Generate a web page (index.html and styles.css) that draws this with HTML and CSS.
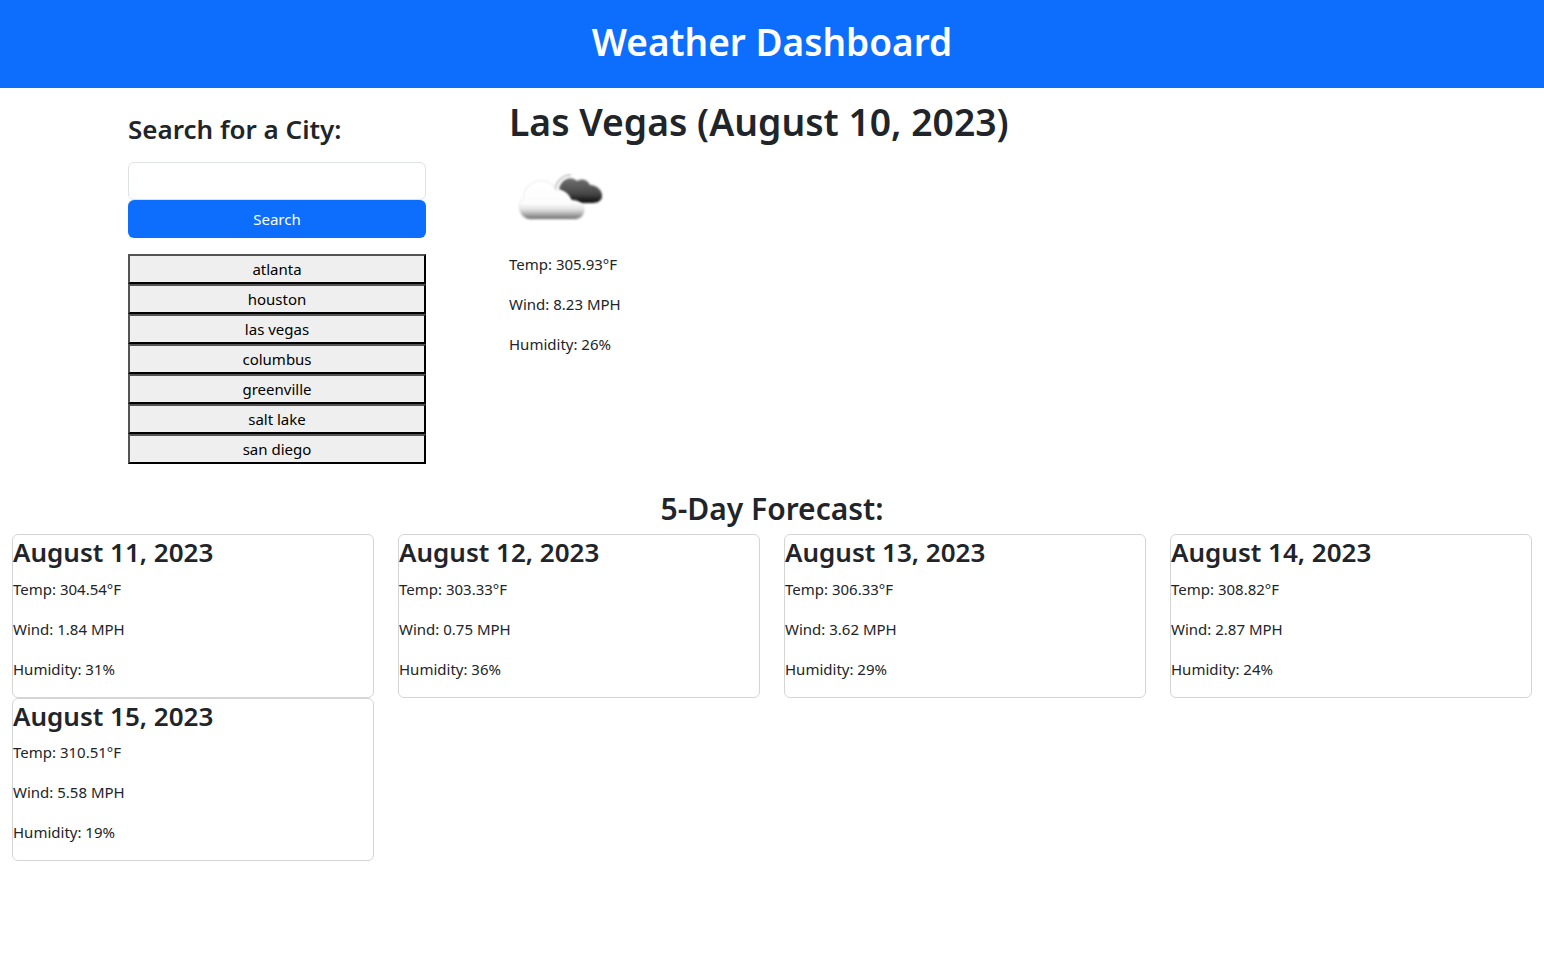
FILE: index.html
```html
<!DOCTYPE html>
<html lang="en">
<head>
  <meta charset="UTF-8" />
  <title>Weather Dashboard</title>
  <link rel="stylesheet" href="styles.css">
</head>
<body>
  <header class="banner">
    <h1>Weather Dashboard</h1>
  </header>

  <section class="top">
    <aside class="search">
      <h4>Search for a City:</h4>
      <input type="text" class="city-input" />
      <button class="search-btn">Search</button>
      <div class="history">
        <button>atlanta</button>
        <button>houston</button>
        <button>las vegas</button>
        <button>columbus</button>
        <button>greenville</button>
        <button>salt lake</button>
        <button>san diego</button>
      </div>
    </aside>

    <main class="current">
      <h2>Las Vegas (August 10, 2023)</h2>
      <svg class="icon" width="100" height="100" viewBox="0 0 100 100">
        <defs>
          <linearGradient id="front" x1="0" y1="0" x2="0" y2="1">
            <stop offset="0" stop-color="#ffffff" />
            <stop offset="0.6" stop-color="#fcfcfc" />
            <stop offset="0.76" stop-color="#dedede" />
            <stop offset="0.9" stop-color="#a0a0a0" />
            <stop offset="1" stop-color="#707070" />
          </linearGradient>
          <linearGradient id="back" x1="0" y1="0" x2="0" y2="1">
            <stop offset="0" stop-color="#707070" />
            <stop offset="0.6" stop-color="#4a4a4a" />
            <stop offset="1" stop-color="#0a0a0a" />
          </linearGradient>
          <filter id="soft"><feGaussianBlur stdDeviation="0.8" /></filter>
          <filter id="halo"><feGaussianBlur stdDeviation="1.6" /></filter>
        </defs>
        <path d="M20 74 C10 72 7 59 15 53 C14 42 25 35 34 36 C40 36 44 40 47 46 C55 44 60 49 62 55 C70 54 76 60 75 66 C74 72 70 74 65 74 Z" fill="#e4e4e4" filter="url(#halo)" />
        <path d="M50 44 C52 34 62 30 68 36 C73 33 79 35 81 40 C88 40 94 46 93 52 C92 57 87 58 82 58 L64 58 C60 52 56 48 50 44 Z" fill="url(#back)" filter="url(#soft)" />
        <path d="M46 45 C47 37 53 30 62 30" fill="none" stroke="#b8b8b8" stroke-width="1.6" filter="url(#soft)" />
        <path d="M20 74 C10 72 7 59 15 53 C14 42 25 35 34 36 C40 36 44 40 47 46 C55 44 60 49 62 55 C70 54 76 60 75 66 C74 72 70 74 65 74 Z" fill="url(#front)" filter="url(#soft)" />
      </svg>
      <p>Temp: 305.93°F</p>
      <p>Wind: 8.23 MPH</p>
      <p>Humidity: 26%</p>
    </main>
  </section>

  <h3 class="forecast-title">5-Day Forecast:</h3>

  <section class="forecast">
    <div class="card">
      <h4>August 11, 2023</h4>
      <p>Temp: 304.54°F</p>
      <p>Wind: 1.84 MPH</p>
      <p>Humidity: 31%</p>
    </div>
    <div class="card">
      <h4>August 12, 2023</h4>
      <p>Temp: 303.33°F</p>
      <p>Wind: 0.75 MPH</p>
      <p>Humidity: 36%</p>
    </div>
    <div class="card">
      <h4>August 13, 2023</h4>
      <p>Temp: 306.33°F</p>
      <p>Wind: 3.62 MPH</p>
      <p>Humidity: 29%</p>
    </div>
    <div class="card">
      <h4>August 14, 2023</h4>
      <p>Temp: 308.82°F</p>
      <p>Wind: 2.87 MPH</p>
      <p>Humidity: 24%</p>
    </div>
    <div class="card">
      <h4>August 15, 2023</h4>
      <p>Temp: 310.51°F</p>
      <p>Wind: 5.58 MPH</p>
      <p>Humidity: 19%</p>
    </div>
  </section>
</body>
</html>
```

FILE: styles.css
```css
* {
  box-sizing: border-box;
}
body {
  margin: 0;
  font-family: "Noto Sans", "Open Sans", sans-serif;
  font-size: 15px;
  line-height: 24px;
  color: #212529;
  background: #fff;
}
h1, h2, h3, h4, p {
  margin: 0;
}
h1, h2, h3, h4 {
  font-weight: 600;
}
.banner {
  height: 88px;
  padding-top: 18px;
  background: #0d6efd;
  color: #fff;
  text-align: center;
}
.banner h1 {
  font-size: 37px;
  line-height: 48px;
}
.top {
  display: flex;
  height: 388px;
}
.search {
  width: 298px;
  margin-left: 128px;
  padding-top: 23px;
}
.search h4 {
  font-size: 26px;
  line-height: 36px;
  margin-bottom: 15px;
}
.city-input {
  display: block;
  width: 100%;
  height: 38px;
  border: 1px solid #dee2e6;
  border-radius: 6px;
  background: #fff;
}
.search-btn {
  display: block;
  width: 100%;
  height: 38px;
  border: 0;
  border-radius: 6px;
  background: #0d6efd;
  color: #fff;
  font: inherit;
}
.history {
  margin-top: 16px;
}
.history button {
  display: block;
  width: 100%;
  height: 30px;
  padding: 0;
  border: 2px outset #000;
  background: #efefef;
  color: #000;
  font: inherit;
}
.current {
  margin-left: 83px;
  padding-top: 10px;
}
.current h2 {
  font-size: 37.3px;
  line-height: 47px;
}
.icon {
  display: block;
}
.current .icon {
  margin-bottom: 7px;
}
.current p {
  margin-bottom: 16px;
}
.forecast-title {
  font-size: 30px;
  line-height: 36px;
  text-align: center;
  margin-top: 15px;
}
.forecast {
  display: flex;
  flex-wrap: wrap;
  margin-top: 7px;
}
.card {
  width: 362px;
  margin: 0 12px;
  height: 163.5px;
  border: 1px solid #d5d5d5;
  border-radius: 6px;
}
.card h4 {
  font-size: 26px;
  line-height: 34px;
  margin-bottom: 7.75px;
}
.card p {
  margin-bottom: 16px;
}
```
